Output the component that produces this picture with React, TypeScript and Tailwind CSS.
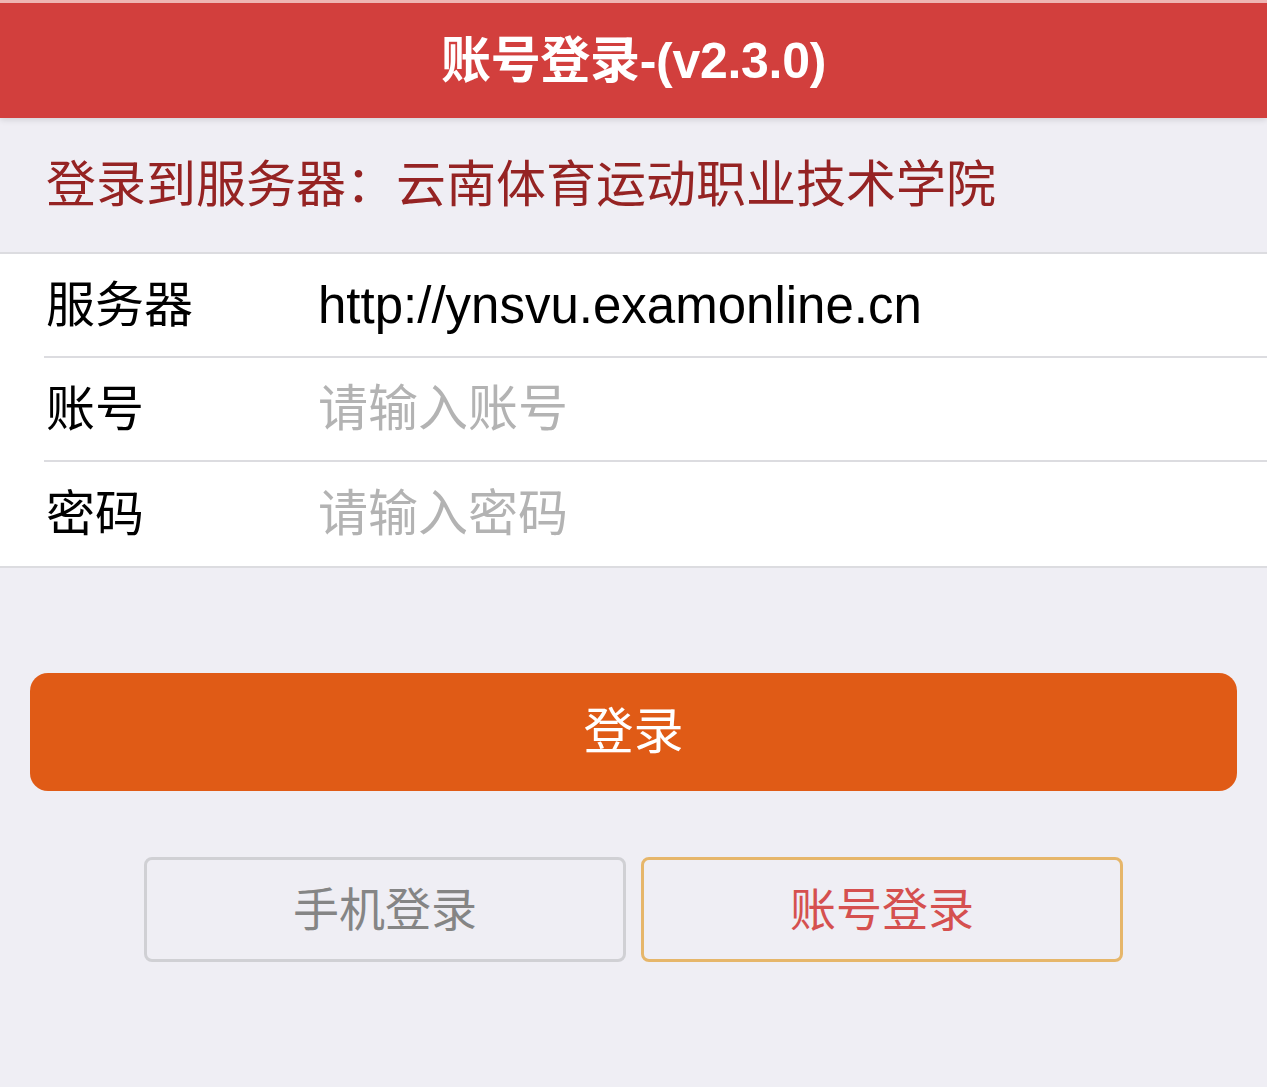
const cjk = "font-['Liberation_Sans','Noto_Sans_CJK_SC',sans-serif]";

const rows = [
  { label: "服务器", value: "http://ynsvu.examonline.cn", placeholder: "" },
  { label: "账号", value: "", placeholder: "请输入账号" },
  { label: "密码", value: "", placeholder: "请输入密码" },
];

export default function App() {
  return (
    <div className={`min-h-[1087px] w-full bg-[#efeef4] ${cjk}`}>
      <header className="h-[118px] border-t-[3px] border-[#eeb5b3] bg-[#d23f3d] flex items-center justify-center shadow-[0_2px_6px_rgba(0,0,0,0.12)]">
        <h1 className="text-[50px] font-semibold text-white leading-none tracking-[-0.3px]">
          账号登录-(v2.3.0)
        </h1>
      </header>

      <div className="h-[134px] flex items-center pl-[46px]">
        <p className="text-[50px] leading-none text-[#952323]">
          登录到服务器：云南体育运动职业技术学院
        </p>
      </div>

      <div className="bg-white border-t-2 border-b-2 border-[#dcdce0]">
        {rows.map((row, i) => (
          <div key={row.label} className="pl-[44px]">
            <div
              className={`h-[104px] flex items-center ${
                i < rows.length - 1 ? "border-b-2 border-[#dcdce0]" : ""
              }`}
            >
              <span className="w-[274px] pl-[2px] text-[49px] leading-none text-black">
                {row.label}
              </span>
              {row.value ? (
                <span className="text-[51px] leading-none text-black">{row.value}</span>
              ) : (
                <span className="text-[50px] leading-none text-[#b3b3b3]">{row.placeholder}</span>
              )}
            </div>
          </div>
        ))}
      </div>

      <div className="px-[30px] pt-[105px]">
        <button className="w-full h-[118px] rounded-[18px] bg-[#e05b16] text-white text-[50px] leading-none">
          登录
        </button>
      </div>

      <div className="flex justify-center gap-[15px] pt-[66px]">
        <button className="w-[482px] h-[105px] rounded-[8px] border-[3px] border-[#d0d0d4] text-[#858585] text-[46px] leading-none">
          手机登录
        </button>
        <button className="w-[482px] h-[105px] rounded-[8px] border-[3px] border-[#e6b66a] text-[#d5504f] text-[46px] leading-none">
          账号登录
        </button>
      </div>
    </div>
  );
}
